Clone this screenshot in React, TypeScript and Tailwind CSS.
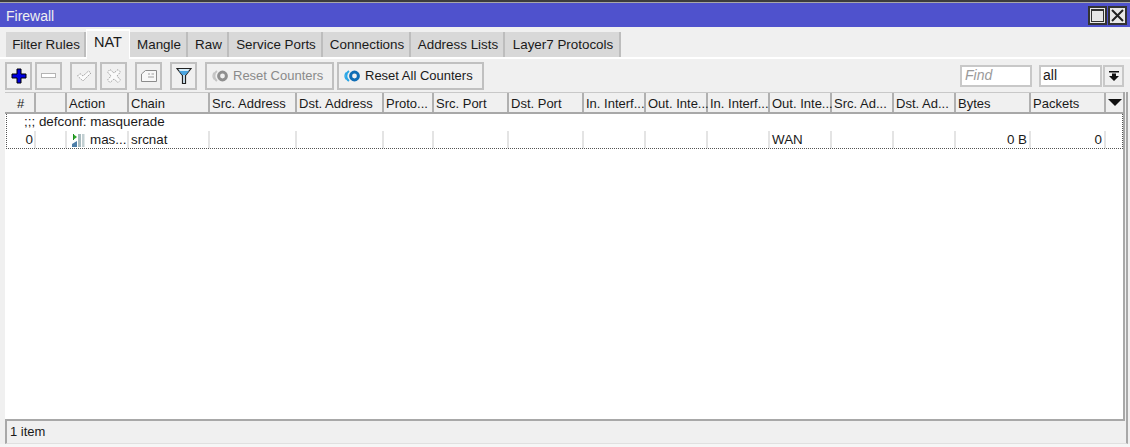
import { ReactNode } from "react";

const tabs = [
  { label: "Filter Rules", w: "w-[80px]" },
  { label: "NAT", w: "w-[44px]", active: true },
  { label: "Mangle", w: "w-[58px]" },
  { label: "Raw", w: "w-[41px]" },
  { label: "Service Ports", w: "w-[94px]" },
  { label: "Connections", w: "w-[88px]" },
  { label: "Address Lists", w: "w-[94px]" },
  { label: "Layer7 Protocols", w: "w-[116px]" },
];

const cols = [
  { label: "#", w: "w-[31px]", center: true, value: "0", right: true },
  { label: "", w: "w-[31px]" },
  { label: "Action", w: "w-[62px]" },
  { label: "Chain", w: "w-[81px]", value: "srcnat" },
  { label: "Src. Address", w: "w-[87px]" },
  { label: "Dst. Address", w: "w-[87px]" },
  { label: "Proto...", w: "w-[50px]" },
  { label: "Src. Port", w: "w-[75px]" },
  { label: "Dst. Port", w: "w-[75px]" },
  { label: "In. Interf...", w: "w-[62px]" },
  { label: "Out. Inte...", w: "w-[62px]" },
  { label: "In. Interf...", w: "w-[62px]" },
  { label: "Out. Inte...", w: "w-[62px]", value: "WAN" },
  { label: "Src. Ad...", w: "w-[62px]" },
  { label: "Dst. Ad...", w: "w-[62px]" },
  { label: "Bytes", w: "w-[75px]", value: "0 B", right: true },
  { label: "Packets", w: "w-[75px]", value: "0", right: true },
];

function IconButton({ children }: { children: ReactNode }) {
  return (
    <button className="w-[27px] h-[28px] flex items-center justify-center border-2 border-[#c0c0c0] bg-[#f0f0f0]">
      {children}
    </button>
  );
}

function ResetIcon({ on }: { on?: boolean }) {
  const outer = on ? "#2aa6e6" : "#c4c4c4";
  const ring = on ? "#0f6db5" : "#8f8f8f";
  return (
    <svg width="16" height="12" viewBox="0 0 16 12">
      <path d="M5 1 A6 6 0 0 0 5 11" fill="none" stroke={outer} strokeWidth="2" />
      <path d="M2.5 2.5 A5 5 0 0 0 2.5 9.5" fill="none" stroke={outer} strokeWidth="1.5" />
      <circle cx="10.5" cy="6" r="3.9" fill="#f0f0f0" stroke={ring} strokeWidth="3" />
    </svg>
  );
}

function TextButton({ label, w, on }: { label: string; w: string; on?: boolean }) {
  return (
    <button className={w + " h-[28px] flex items-center pl-[5px] gap-[5px] border-2 border-[#c0c0c0] bg-[#f0f0f0] " + (on ? "text-[#1a1a1a]" : "text-[#8a8a8a]")}>
      <ResetIcon on={on} />
      <span>{label}</span>
    </button>
  );
}

export default function App() {
  return (
    <div className="w-[1130px] h-[447px] flex flex-col bg-[#f0f0f0] overflow-hidden font-['Liberation_Sans',sans-serif] text-[13px] text-[#1a1a1a]">
      <div className="h-[2px] shrink-0 bg-[#3c3c3c]" />
      <div className="h-[1px] shrink-0 bg-[#a8a8a8]" />

      {/* Title bar */}
      <div className="h-[24px] shrink-0 bg-[#4f52cd] flex items-center justify-between pl-[6px] pr-[3px]">
        <span className="text-[#f0f0f0] text-[14px] pt-[2px]">Firewall</span>
        <div className="flex gap-[1px]">
          <div className="w-[19px] h-[19px] bg-[#e8e8e8] border-2 border-[#333] flex items-center justify-center">
            <div className="w-[13px] h-[13px] border border-[#333] border-t-2" />
          </div>
          <div className="w-[19px] h-[19px] bg-[#e8e8e8] border-2 border-[#333] flex items-center justify-center">
            <svg width="13" height="13" viewBox="0 0 13 13">
              <path d="M1 1 L12 12 M12 1 L1 12" stroke="#222" strokeWidth="2" />
            </svg>
          </div>
        </div>
      </div>

      {/* Tabs */}
      <div className="h-[32px] shrink-0 flex items-end pl-[6px] border-b-2 border-b-white text-[13.4px]">
        {tabs.map((t) =>
          t.active ? (
            <div key={t.label} className={t.w + " h-[30px] mb-[-2px] bg-[#f0f0f0] border-t-2 border-x border-white flex items-center justify-center z-10 pb-[4px] text-[14.5px]"}>
              {t.label}
            </div>
          ) : (
            <div key={t.label} className={t.w + " h-[25px] bg-[#d8d8d8] border-r-2 border-[#bdbdbd] flex items-center justify-center whitespace-nowrap pl-[2px] pt-[2px]"}>
              {t.label}
            </div>
          ),
        )}
      </div>

      {/* Toolbar */}
      <div className="h-[32px] shrink-0 flex items-center pl-[5px] pr-[6px] pt-[1px]">
        <IconButton>
          <svg width="16" height="16" viewBox="0 0 16 16">
            <path d="M6 1 H10 V6 H15 V10 H10 V15 H6 V10 H1 V6 H6 Z" fill="#0000e0" stroke="#000" strokeWidth="1" />
          </svg>
        </IconButton>
        <div className="ml-[3px]">
          <IconButton>
            <div className="w-[15px] h-[5px] border border-[#b4b4b4] bg-white" />
          </IconButton>
        </div>
        <div className="ml-[8px]">
          <IconButton>
            <svg width="16" height="16" viewBox="0 0 16 16">
              <path d="M1.5 8 L4 5.5 L7 8 L12.5 3 L15 5 L7 13 Z" fill="#fafafa" stroke="#a8a8a8" strokeWidth="1" strokeDasharray="2 1" />
            </svg>
          </IconButton>
        </div>
        <div className="ml-[3px]">
          <IconButton>
            <svg width="16" height="16" viewBox="0 0 16 16">
              <path d="M4 1.5 L8 5 L12 1.5 L14.5 4 L11 8 L14.5 12 L12 14.5 L8 11 L4 14.5 L1.5 12 L5 8 L1.5 4 Z" fill="#fafafa" stroke="#a8a8a8" strokeWidth="1" strokeDasharray="2 1" />
            </svg>
          </IconButton>
        </div>
        <div className="ml-[8px]">
          <IconButton>
            <svg width="16" height="13" viewBox="0 0 16 13">
              <path d="M0.5 12.5 V5 L4.5 1.5 H15.5 V12.5 Z" fill="#f8f8f8" stroke="#8c8c8c" />
              <path d="M7 5 H9 M10.5 5 H13 M7 8 H13" stroke="#a0a0a0" />
            </svg>
          </IconButton>
        </div>
        <div className="ml-[8px]">
          <IconButton>
            <svg width="16" height="18" viewBox="0 0 16 18">
              <path d="M1 1.5 H15 L9.5 8.5 V16.5 H6.5 V8.5 Z" fill="#d6ecf8" stroke="#222" strokeWidth="1.2" />
              <path d="M3 4 H13 L9.3 8 H6.7 Z" fill="#4aa5e0" />
            </svg>
          </IconButton>
        </div>
        <div className="ml-[8px]">
          <TextButton label="Reset Counters" w="w-[129px]" />
        </div>
        <div className="ml-[3px]">
          <TextButton label="Reset All Counters" w="w-[147px]" on />
        </div>
        <div className="ml-auto w-[72px] h-[22px] bg-white border-2 border-[#c8c8c8] flex items-center pl-[3px] italic text-[#9a9a9a] text-[14px]">
          Find
        </div>
        <div className="ml-[7px] w-[63px] h-[22px] bg-white border-2 border-[#c8c8c8] flex items-center pl-[2px] text-[14px]">all</div>
        <div className="ml-[1px] w-[21px] h-[22px] border-2 border-[#c8c8c8] flex items-center justify-center">
          <svg width="12" height="12" viewBox="0 0 12 12">
            <path d="M1 1 H11 V2.5 H1 Z M4 3.5 H8 V6 H11 L6 11 L1 6 H4 Z" fill="#111" />
          </svg>
        </div>
      </div>

      {/* Table + status, framed by the inner window edge */}
      <div className="flex-1 min-h-0 mt-[1px] ml-[5px] mr-[2px] flex flex-col border-l-2 border-r-2 border-[#a8a8a8] border-b border-b-[#e0e0e0]">
        <div className="flex-1 min-h-0 mr-[1px] ml-[-2px] flex flex-col border-r-2 border-b-2 border-[#a8a8a8] bg-white">
          <div className="h-[22px] shrink-0 flex bg-[#f0f0f0] border-b-2 border-[#a8a8a8] border-t border-t-[#c8c8c8]">
            {cols.map((c, i) => (
              <div key={i} className={c.w + " shrink-0 border-r-2 border-[#b0b0b0] flex items-center whitespace-nowrap pl-[2px] pt-[2px]" + (c.center ? " justify-center pl-0" : "")}>
                {c.label}
              </div>
            ))}
            <div className="flex-1 flex items-center justify-center">
              <svg width="14" height="7" viewBox="0 0 14 7">
                <path d="M0 0 H14 L7 7 Z" fill="#111" />
              </svg>
            </div>
          </div>

          <div className="border border-dotted border-[#555] ml-[1px] mr-0 border-t-0 text-[13.4px]">
            <div className="h-[17px] flex items-center pl-[17px]">;;; defconf: masquerade</div>
            <div className="h-[17px] flex">
              {cols.map((c, i) => (
                <div key={i} className={c.w + " shrink-0 border-r-2 border-[#e4e4e4] flex items-center whitespace-nowrap overflow-hidden pl-[2px] pt-[2px]" + (c.right ? " justify-end" : "") + (i === 0 ? " ml-[-2px] pr-[1px]" : " pr-[2px]")}>
                  {c.label === "Action" ? (
                    <span className="flex items-center gap-[4px] pl-[3px]">
                      <svg width="14" height="15" viewBox="0 0 14 15">
                        <path d="M1 1 L5 4 L1 7 Z" fill="#2aa52a" />
                        <path d="M1 1 H2 V7 H1 Z" fill="#1d8f1d" />
                        <path d="M0 14 V11 L5 8 V14 Z" fill="#4d7ea8" />
                        <rect x="6" y="1" width="3" height="13" fill="#a9bcc0" />
                        <rect x="10" y="1" width="2.5" height="13" fill="#c2cfd2" />
                      </svg>
                      <span>mas...</span>
                    </span>
                  ) : (
                    c.value
                  )}
                </div>
              ))}
            </div>
          </div>
          <div className="flex-1" />
        </div>

        {/* Status bar */}
        <div className="shrink-0 h-[22px] pl-[3px] flex items-center">1 item</div>
      </div>
      <div className="h-[3px] shrink-0 bg-[#f6f6f6]" />
    </div>
  );
}
